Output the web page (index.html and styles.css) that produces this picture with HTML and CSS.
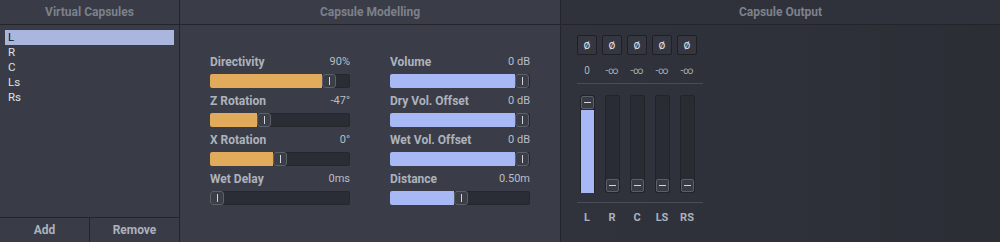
FILE: index.html
```html
<!DOCTYPE html>
<html>
<head>
<meta charset="utf-8">
<link rel="stylesheet" href="styles.css">
</head>
<body>
<div class="app">
  <section class="panel left">
    <div class="head">Virtual Capsules</div>
    <ul class="list">
      <li class="sel">L</li>
      <li>R</li>
      <li>C</li>
      <li>Ls</li>
      <li>Rs</li>
    </ul>
    <div class="foot">
      <button class="btn">Add</button>
      <button class="btn">Remove</button>
    </div>
  </section>
  <section class="panel mid">
    <div class="head">Capsule Modelling</div>
    <div class="cols">
      <div class="col">
        <div class="ctl"><div class="lbl"><span>Directivity</span><span class="val">90%</span></div>
          <div class="track"><div class="fill orange" style="width:112px"></div><div class="knob"></div></div></div>
        <div class="ctl"><div class="lbl"><span>Z Rotation</span><span class="val">-47°</span></div>
          <div class="track"><div class="fill orange" style="width:47px"></div><div class="knob"></div></div></div>
        <div class="ctl"><div class="lbl"><span>X Rotation</span><span class="val">0°</span></div>
          <div class="track"><div class="fill orange" style="width:63px"></div><div class="knob"></div></div></div>
        <div class="ctl"><div class="lbl"><span>Wet Delay</span><span class="val">0ms</span></div>
          <div class="track"><div class="fill orange" style="width:0px"></div><div class="knob"></div></div></div>
      </div>
      <div class="col">
        <div class="ctl"><div class="lbl"><span>Volume</span><span class="val">0 dB</span></div>
          <div class="track"><div class="fill blue" style="width:125px"></div><div class="knob"></div></div></div>
        <div class="ctl"><div class="lbl"><span>Dry Vol. Offset</span><span class="val">0 dB</span></div>
          <div class="track"><div class="fill blue" style="width:125px"></div><div class="knob"></div></div></div>
        <div class="ctl"><div class="lbl"><span>Wet Vol. Offset</span><span class="val">0 dB</span></div>
          <div class="track"><div class="fill blue" style="width:125px"></div><div class="knob"></div></div></div>
        <div class="ctl"><div class="lbl"><span>Distance</span><span class="val">0.50m</span></div>
          <div class="track"><div class="fill blue" style="width:64px"></div><div class="knob"></div></div></div>
      </div>
    </div>
  </section>
  <section class="panel right">
    <div class="head">Capsule Output</div>
    <div class="out">
      <div class="row phases">
        <div class="phase">ø</div><div class="phase">ø</div><div class="phase">ø</div><div class="phase">ø</div><div class="phase">ø</div>
      </div>
      <div class="row levels">
        <div class="lv">0</div><div class="lv">-∞</div><div class="lv">-∞</div><div class="lv">-∞</div><div class="lv">-∞</div>
      </div>
      <div class="row meters">
        <div class="mcol"><div class="meter"><div class="mknob"></div><div class="mfill" style="height:84px"></div><div class="mspace"></div></div></div>
        <div class="mcol"><div class="meter"><div class="mspace"></div><div class="mknob"></div></div></div>
        <div class="mcol"><div class="meter"><div class="mspace"></div><div class="mknob"></div></div></div>
        <div class="mcol"><div class="meter"><div class="mspace"></div><div class="mknob"></div></div></div>
        <div class="mcol"><div class="meter"><div class="mspace"></div><div class="mknob"></div></div></div>
      </div>
      <div class="row names">
        <div class="nm">L</div><div class="nm">R</div><div class="nm">C</div><div class="nm">LS</div><div class="nm">RS</div>
      </div>
    </div>
  </section>
</div>
</body>
</html>
```

FILE: styles.css
```css
* { box-sizing: border-box; }
html, body { margin: 0; padding: 0; }
body {
  width: 1000px; height: 242px; overflow: hidden;
  background: #393c46;
  font-family: Roboto, "Liberation Sans", sans-serif;
}
.app { display: flex; height: 242px; }
.panel { display: flex; flex-direction: column; height: 242px; }
.left { width: 180px; border-right: 1px solid #23252b; background: #393c46; }
.mid { width: 381px; border-right: 1px solid #23252b; background: #3a3d47; }
.right { flex: 1; background: linear-gradient(90deg, #30333c, #2c2e36); }
.head {
  height: 25px; border-bottom: 1px solid #23252b;
  display: flex; align-items: center; justify-content: center;
  color: #7d818b; font-size: 12px; font-weight: 700;
}
.right .head { background: #30323b; }
.list { list-style: none; margin: 0; padding: 5px 5px 0 5px; flex: 1; }
.list li {
  height: 15px; line-height: 15px; font-size: 11.5px; color: #dfe2ea;
  padding-left: 3px;
}
.list li.sel { background: #aab6dd; color: #111; }
.foot { height: 25px; border-top: 1px solid #23252b; display: flex; }
.btn {
  flex: 1; background: transparent; border: none; margin: 0; padding: 0;
  color: #acb1bd; font-family: inherit; font-size: 12px; font-weight: 700;
}
.btn + .btn { border-left: 1px solid #23252b; }
.cols { display: flex; gap: 40px; padding: 30px 0 0 30px; }
.col { width: 140px; display: flex; flex-direction: column; }
.ctl { display: flex; flex-direction: column; gap: 5px; margin-bottom: 6px; }
.lbl {
  display: flex; justify-content: space-between; height: 14px; line-height: 14px;
  color: #aeb2bd; font-size: 12px; font-weight: 700;
}
.lbl .val { font-weight: 400; font-size: 11px; color: #b9bdc7; }
.track {
  height: 14px; background: #2b2d34; border: 1px solid #25272d; border-radius: 2px;
  display: flex; overflow: visible;
}
.fill { margin: -1px 0 -1px -1px; height: 14px; border-radius: 2px 0 0 2px; }
.orange { background: #e2ab5c; }
.blue { background: #a7b8f5; }
.knob {
  width: 14px; height: 14px; margin: -1px 0; flex: none;
  background: #3b3e47; border: 1px solid #5c606b; border-radius: 3px;
  display: flex; align-items: center; justify-content: center;
}
.knob::after { content: ""; width: 1px; height: 8px; background: #cfd3dc; }
.out { display: flex; flex-direction: column; padding: 10px 0 0 16px; width: 144px; }
.row { display: flex; gap: 5px; }
.phase {
  width: 20px; height: 20px; border: 1px solid #1e2026; border-radius: 2px;
  background: #343740; color: #d6d9e0; font-size: 12px;
  display: flex; align-items: center; justify-content: center;
}
.levels { margin-top: 9px; height: 14px; border-bottom: 1px solid #4a4d57; padding-bottom: 5px; box-sizing: content-box; width: 126px; }
.lv { width: 20px; text-align: center; font-size: 10px; color: #aeb2bd; line-height: 14px; }
.meters { margin-top: 11px; height: 98px; border-bottom: 1px solid #4a4d57; padding-bottom: 9px; box-sizing: content-box; width: 126px; }
.mcol { width: 20px; display: flex; justify-content: center; }
.meter {
  width: 15px; height: 98px; background: #2a2c33; border: 1px solid #22242a; border-radius: 2px;
  display: flex; flex-direction: column;
}
.mspace { flex: 1; }
.mfill { background: #a7b8f5; margin: 1px 0 -1px; }
.mknob {
  height: 13px; flex: none; background: #383b44; border: 1px solid #5a5e69; border-radius: 2px;
  display: flex; align-items: center; justify-content: center;
}
.mknob::after { content: ""; width: 7px; height: 1px; background: #cfd3dc; }
.names { margin-top: 8px; }
.nm { width: 20px; text-align: center; font-size: 11px; font-weight: 700; color: #acb1bd; }
```
